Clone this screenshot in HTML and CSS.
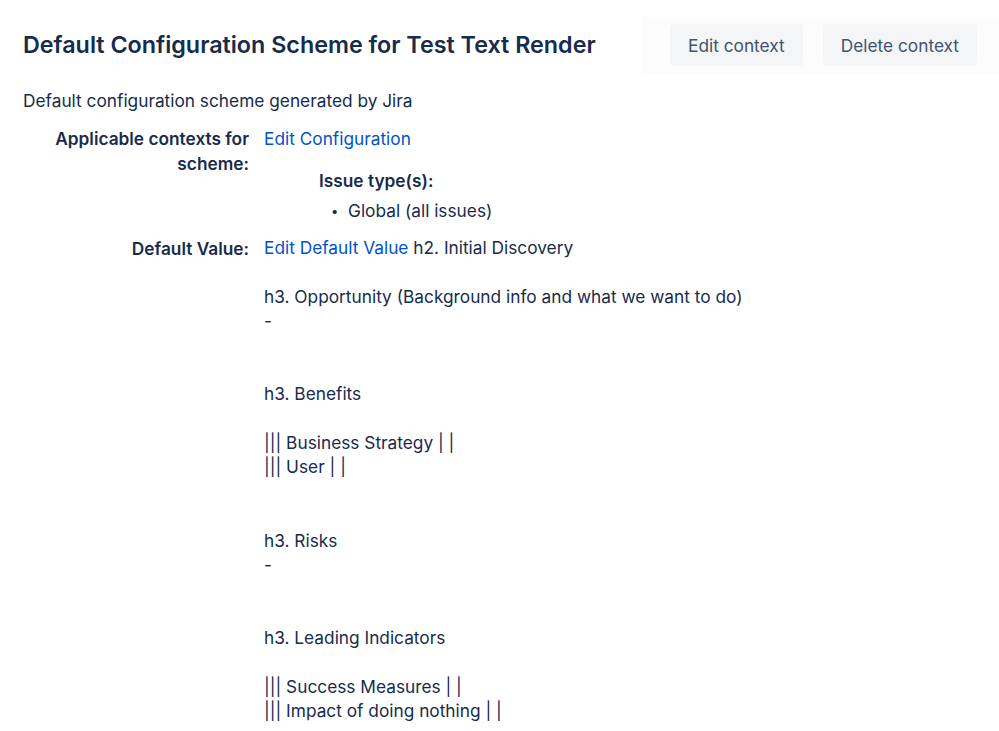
FILE: index.html
```html
<!DOCTYPE html>
<html>
<head>
<meta charset="utf-8">
<link rel="stylesheet" href="styles.css">
</head>
<body>
<div class="page">
  <div class="header">
    <h1 class="title">Default Configuration Scheme for Test Text Render</h1>
    <div class="actions">
      <button class="btn">Edit context</button>
      <button class="btn">Delete context</button>
    </div>
  </div>
  <p class="desc">Default configuration scheme generated by Jira</p>
  <div class="fields">
    <div class="label">Applicable contexts for scheme:</div>
    <div class="value">
      <a class="link" href="#">Edit Configuration</a>
      <div class="context">
        <div class="ctx-title">Issue type(s):</div>
        <ul class="ctx-list"><li>Global (all issues)</li></ul>
      </div>
    </div>
    <div class="label">Default Value:</div>
    <div class="value default"><a class="link" href="#">Edit Default Value</a> h2. Initial Discovery

h3. Opportunity (Background info and what we want to do)
-


h3. Benefits

||| Business Strategy | |
||| User | |


h3. Risks
-


h3. Leading Indicators

||| Success Measures | |
||| Impact of doing nothing | |</div>
  </div>
</div>
</body>
</html>
```
FILE: styles.css
```css
* { box-sizing: border-box; }
html, body { margin: 0; padding: 0; background: #fff; }
body {
  font-family: Inter, "Noto Sans", sans-serif;
  font-size: 17.3px;
  line-height: 24.35px;
  color: #172b4d;
}
.page { padding: 16px 22px 0 23px; }
.header {
  display: flex;
  align-items: center;
  justify-content: space-between;
  height: 58px;
  margin-right: -22px;
}
.title {
  margin: 0;
  font-size: 23.3px;
  font-weight: 600;
  line-height: 30px;
  color: #172b4d;
}
.actions {
  display: flex;
  align-items: center;
  gap: 20px;
  height: 57px;
  padding: 0 22px 0 27px;
  background: #fcfcfd;
}
.btn {
  font-family: inherit;
  font-size: 17.3px;
  color: #42526e;
  background: #f4f5f7;
  border: none;
  border-radius: 4px;
  height: 42px;
  padding: 0 18px;
  cursor: pointer;
}
.desc { margin: 15px 0 0; }
.fields {
  display: grid;
  grid-template-columns: 226px 1fr;
  column-gap: 15px;
  row-gap: 14px;
  margin-top: 14px;
}
.label {
  text-align: right;
  font-weight: 600;
  padding-left: 20px;
}
.link { color: #0052cc; text-decoration: none; }
.context { margin: 17px 0 0 55px; }
.ctx-title { font-weight: 600; }
.ctx-list {
  margin: 6px 0 0;
  padding: 0 0 0 29px;
  list-style: none;
}
.ctx-list li { position: relative; }
.ctx-list li::before {
  content: "•";
  position: absolute;
  left: -17px;
  font-size: 13px;
}
.default { white-space: pre-wrap; margin-top: -1px; }
```
